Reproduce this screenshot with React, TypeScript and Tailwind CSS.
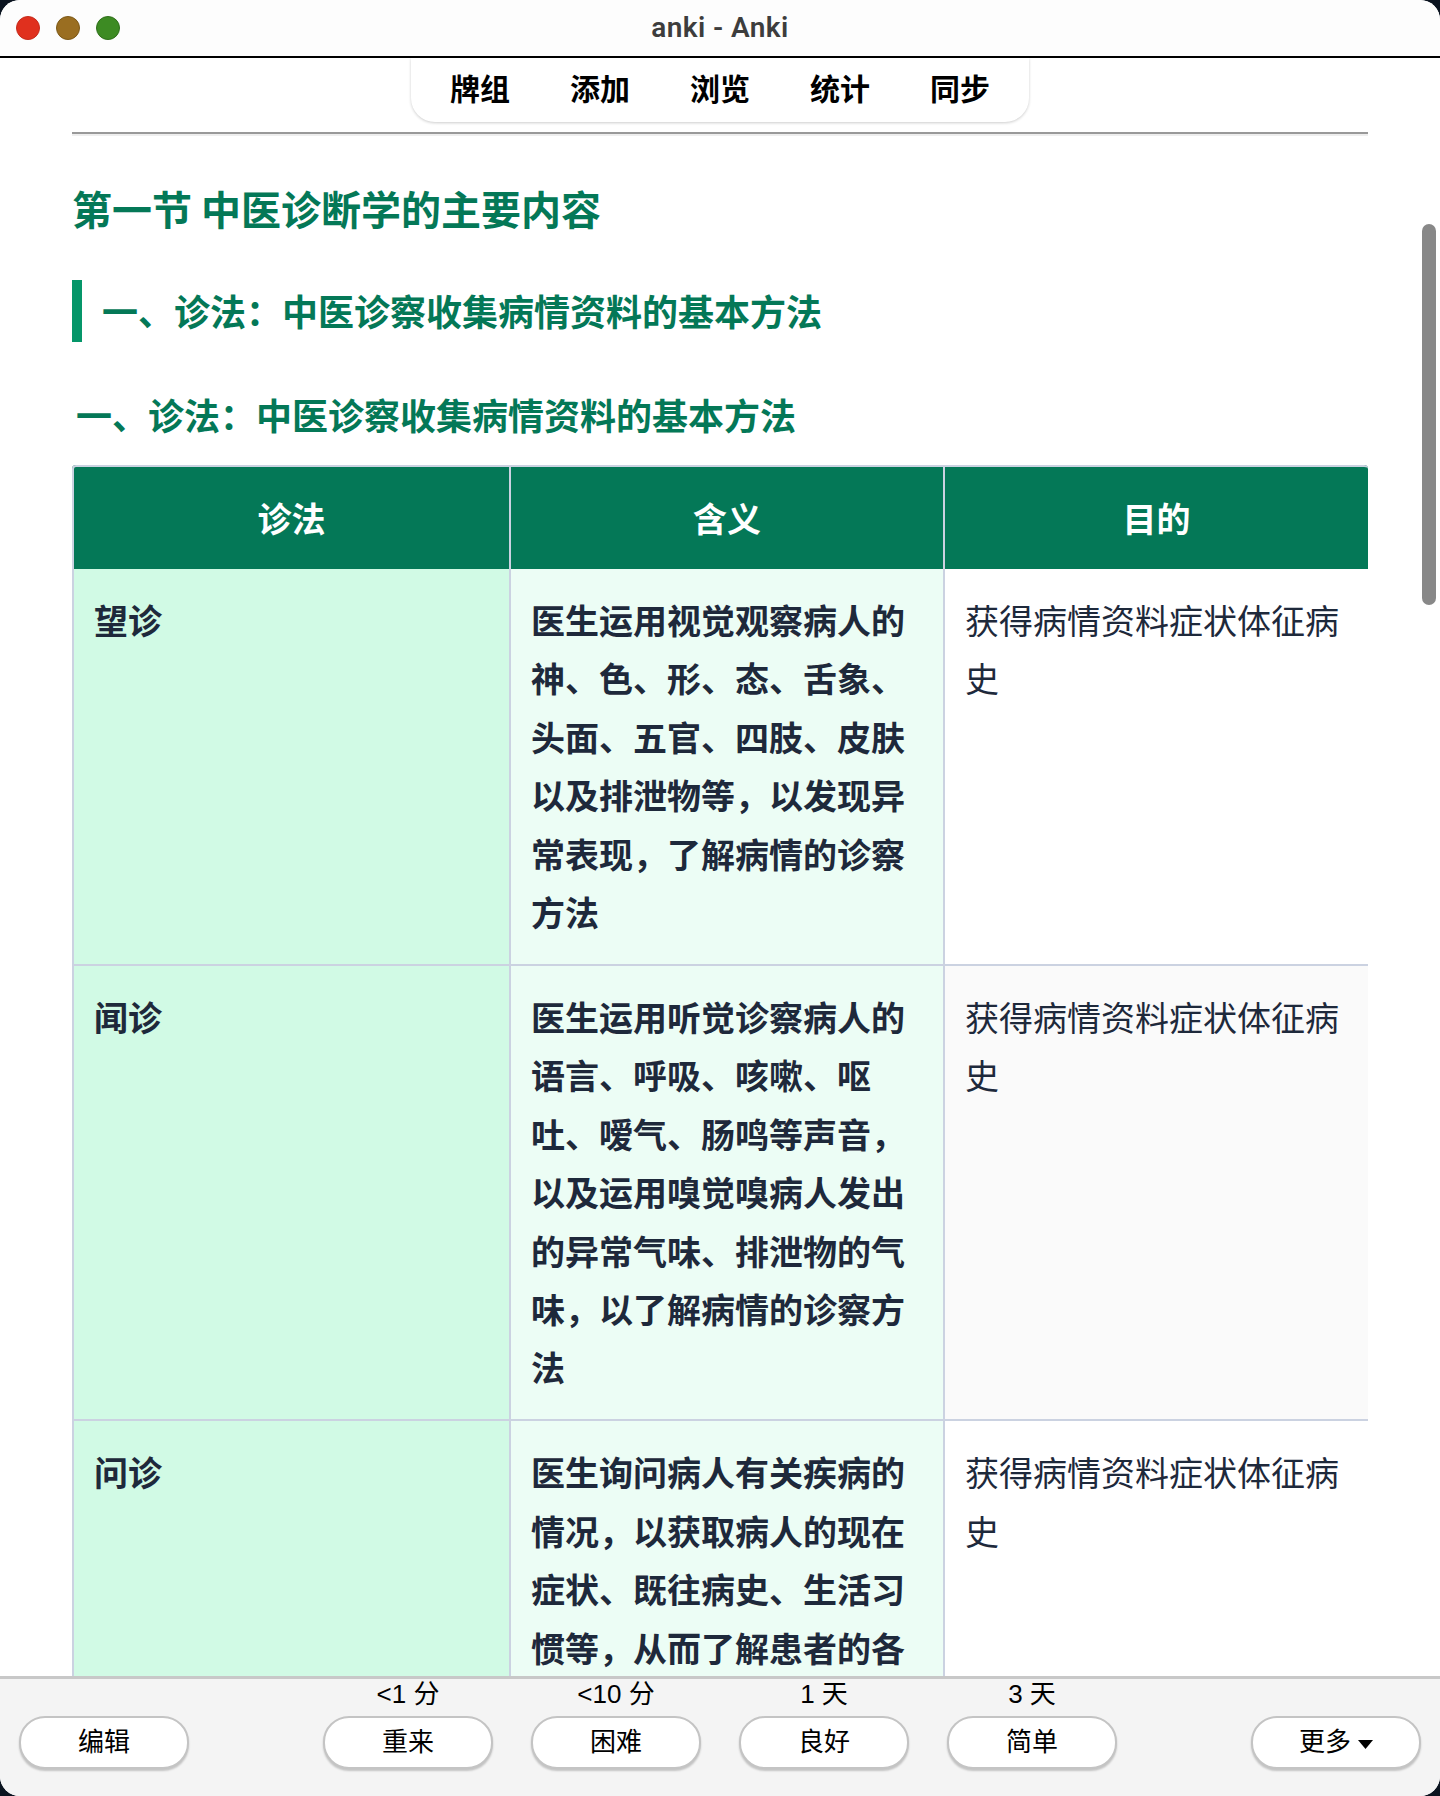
import React from 'react'

const cjk = "font-['Liberation_Sans','Noto_Sans_CJK_SC',sans-serif]"

type Row = {
  name: string
  meaning: string
  stripe?: boolean
}

const rows: Row[] = [
  {
    name: '望诊',
    meaning: '医生运用视觉观察病人的神、色、形、态、舌象、头面、五官、四肢、皮肤以及排泄物等，以发现异常表现，了解病情的诊察方法',
  },
  {
    name: '闻诊',
    meaning: '医生运用听觉诊察病人的语言、呼吸、咳嗽、呕吐、嗳气、肠鸣等声音，以及运用嗅觉嗅病人发出的异常气味、排泄物的气味，以了解病情的诊察方法',
    stripe: true,
  },
  {
    name: '问诊',
    meaning: '医生询问病人有关疾病的情况，以获取病人的现在症状、既往病史、生活习惯等，从而了解患者的各',
  },
]

const navItems = ['牌组', '添加', '浏览', '统计', '同步']

const answers = [
  { label: '<1 分', text: '重来' },
  { label: '<10 分', text: '困难' },
  { label: '1 天', text: '良好' },
  { label: '3 天', text: '简单' },
]

const PillButton: React.FC<{ children: React.ReactNode }> = ({ children }) => (
  <button className="flex h-[53px] w-[170px] items-center justify-center rounded-[26px] border-2 border-[#c4c4c4] bg-white text-[26px] text-black shadow-[0_2px_2px_rgba(0,0,0,0.2)]">
    {children}
  </button>
)

const App: React.FC = () => {
  return (
    <div className={`h-[1796px] w-[1440px] overflow-hidden bg-[#0b1420] ${cjk}`}>
      <div className="relative flex h-full flex-col overflow-hidden rounded-[20px] bg-white">
        <div className="relative flex h-[58px] shrink-0 items-center justify-center border-b-2 border-black bg-[#fdfdfd]">
          <div className="absolute left-[16px] top-[16px] flex gap-[16px]">
            <span className="h-[24px] w-[24px] rounded-full border border-[#c52b1c] bg-[#e0301e]" />
            <span className="h-[24px] w-[24px] rounded-full border border-[#7c5918] bg-[#9a6e21]" />
            <span className="h-[24px] w-[24px] rounded-full border border-[#2f6f1b] bg-[#3d8b23]" />
          </div>
          <span className="text-[28px] font-semibold tracking-[0.4px] text-[#3d3d3d] font-['Roboto',sans-serif]">anki - Anki</span>
        </div>

        <div className="relative min-h-0 flex-1 overflow-hidden font-['Noto_Sans_CJK_SC',sans-serif]">
          <div className="mx-auto flex h-[64px] w-[618px] items-center justify-center gap-[60px] rounded-b-[24px] bg-white pb-[6px] text-[30px] font-bold text-black shadow-[0_1px_3px_rgba(0,0,0,0.2)]">
            {navItems.map(item => (
              <span key={item}>{item}</span>
            ))}
          </div>

          <div className="px-[72px]">
            <div className="mt-[10px] h-[4px] border-b-2 border-t-2 border-b-[#eeeeee] border-t-[#999999]" />

            <h1 className="mt-[42px] text-[40px] font-bold leading-[60px] text-[#047857]">第一节 中医诊断学的主要内容</h1>

            <h2 className="mt-[42px] flex h-[62px] items-center border-l-[10px] border-[#059669] pb-[2px] pl-[20px] text-[36px] font-bold text-[#047857]">
              一、诊法：中医诊察收集病情资料的基本方法
            </h2>

            <h3 className="mt-[41px] pl-[4px] text-[36px] font-bold leading-[62px] text-[#047857]">
              一、诊法：中医诊察收集病情资料的基本方法
            </h3>

            <table className="mt-[20px] w-full table-fixed border-separate border-spacing-0 text-[34px] leading-[58.4px] text-[#1e293b]">
              <colgroup>
                <col className="w-[439px]" />
                <col className="w-[434px]" />
                <col />
              </colgroup>
              <thead>
                <tr className="h-[104px] bg-[#047857] text-white">
                  <th className="rounded-tl-[4px] border-l-2 border-r-2 border-t-2 border-[#cbd2e1] font-bold">诊法</th>
                  <th className="border-r-2 border-t-2 border-[#cbd2e1] font-bold">含义</th>
                  <th className="rounded-tr-[4px] border-t-2 border-[#cbd2e1] font-bold">目的</th>
                </tr>
              </thead>
              <tbody>
                {rows.map(row => (
                  <tr key={row.name}>
                    <td className="border-b-2 border-l-2 border-r-2 border-[#cbd2e1] bg-[#d1fae5] pb-[22.5px] pl-[20px] pr-[20px] pt-[22px] align-top font-bold">
                      {row.name}
                    </td>
                    <td className="border-b-2 border-r-2 border-[#cbd2e1] bg-[#ecfdf5] pb-[22.5px] pl-[20px] pr-[20px] pt-[22px] align-top font-bold">
                      {row.meaning}
                    </td>
                    <td className={`border-b-2 border-[#cbd2e1] pb-[22.5px] pl-[20px] pr-[20px] pt-[22px] align-top ${row.stripe ? 'bg-[#fafafa]' : 'bg-white'}`}>
                      获得病情资料症状体征病史
                    </td>
                  </tr>
                ))}
              </tbody>
            </table>
          </div>

          <div className="absolute right-[4px] top-[166px] h-[381px] w-[14px] rounded-[7px] bg-[#888888]" />
        </div>

        <div className="flex h-[120px] shrink-0 justify-between border-t-[3px] border-[#c8c8c8] bg-[#f4f4f4] px-[19px]">
          <div className="mt-[37px]">
            <PillButton>编辑</PillButton>
          </div>
          <div className="flex gap-[38px]">
            {answers.map(answer => (
              <div key={answer.text} className="flex flex-col items-center">
                <div className="h-[37px] whitespace-nowrap text-[26px] leading-[30px] text-black">{answer.label}</div>
                <PillButton>{answer.text}</PillButton>
              </div>
            ))}
          </div>
          <div className="mt-[37px]">
            <PillButton>
              更多
              <svg className="ml-[7px] mt-[4px]" width="15" height="9" viewBox="0 0 15 9">
                <path d="M0 0h15L7.5 9z" fill="#000" />
              </svg>
            </PillButton>
          </div>
        </div>
      </div>
    </div>
  )
}

export default App
